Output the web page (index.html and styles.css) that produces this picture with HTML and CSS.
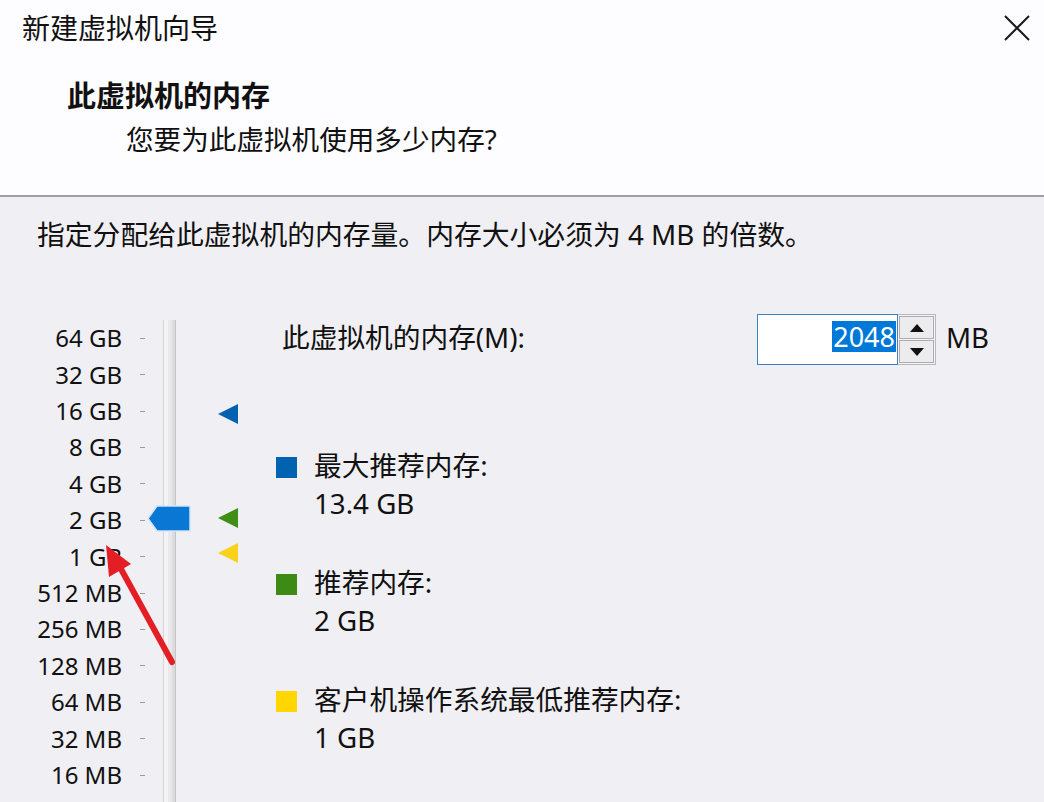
FILE: index.html
```html
<!DOCTYPE html>
<html lang="zh-CN">
<head>
<meta charset="utf-8">
<title>新建虚拟机向导</title>
<link rel="stylesheet" href="styles.css">
</head>
<body>
<div class="dialog">
  <header class="top">
    <div class="titlebar">
      <span class="title">新建虚拟机向导</span>
      <svg class="close" width="26" height="26" viewBox="0 0 26 26"><path d="M1 1 L25 25 M25 1 L1 25" stroke="#1a1a1a" stroke-width="2" fill="none"/></svg>
    </div>
    <div class="heading">此虚拟机的内存</div>
    <div class="subheading">您要为此虚拟机使用多少内存?</div>
  </header>
  <main class="content">
    <p class="intro">指定分配给此虚拟机的内存量。内存大小必须为 4 MB 的倍数。</p>
    <div class="main">
      <div class="slider">
        <div class="scale">
          <div class="row"><span class="lbl">64 GB</span><span class="tick"></span></div>
          <div class="row"><span class="lbl">32 GB</span><span class="tick"></span></div>
          <div class="row"><span class="lbl">16 GB</span><span class="tick"></span></div>
          <div class="row"><span class="lbl">8 GB</span><span class="tick"></span></div>
          <div class="row"><span class="lbl">4 GB</span><span class="tick"></span></div>
          <div class="row"><span class="lbl">2 GB</span><span class="tick"></span></div>
          <div class="row"><span class="lbl">1 GB</span><span class="tick"></span></div>
          <div class="row"><span class="lbl">512 MB</span><span class="tick"></span></div>
          <div class="row"><span class="lbl">256 MB</span><span class="tick"></span></div>
          <div class="row"><span class="lbl">128 MB</span><span class="tick"></span></div>
          <div class="row"><span class="lbl">64 MB</span><span class="tick"></span></div>
          <div class="row"><span class="lbl">32 MB</span><span class="tick"></span></div>
          <div class="row"><span class="lbl">16 MB</span><span class="tick"></span></div>
          <div class="row"><span class="lbl">8 MB</span><span class="tick"></span></div>
          <div class="row"><span class="lbl">4 MB</span><span class="tick"></span></div>
        </div>
        <div class="track"></div>
        <svg class="thumb" width="44" height="27" viewBox="0 0 44 27"><path d="M1 13.5 L10 1 L43 1 L43 26 L10 26 Z" fill="#0a77d5" stroke="#cfe6fa" stroke-width="1.5"/></svg>
        <svg class="marker m-max" width="22" height="22" viewBox="0 0 22 22"><path d="M1 11 L21 1 L21 21 Z" fill="#0061b0"/></svg>
        <svg class="marker m-rec" width="22" height="22" viewBox="0 0 22 22"><path d="M1 11 L21 1 L21 21 Z" fill="#3f8e16"/></svg>
        <svg class="marker m-min" width="22" height="22" viewBox="0 0 22 22"><path d="M1 11 L21 1 L21 21 Z" fill="#f8d21c"/></svg>
      </div>
      <div class="panel">
        <div class="memrow">
          <span class="memlabel">此虚拟机的内存(M):</span>
          <div class="spin">
            <div class="field"><span class="sel">2048</span></div>
            <div class="buttons">
              <div class="btn"><svg width="14" height="8" viewBox="0 0 14 8"><path d="M7 0 L14 8 L0 8 Z" fill="#111"/></svg></div>
              <div class="btn"><svg width="14" height="8" viewBox="0 0 14 8"><path d="M0 0 L14 0 L7 8 Z" fill="#111"/></svg></div>
            </div>
          </div>
          <span class="unit">MB</span>
        </div>
        <div class="legend">
          <div class="item">
            <div class="line"><span class="sw sw-blue"></span><span>最大推荐内存:</span></div>
            <div class="value">13.4 GB</div>
          </div>
          <div class="item">
            <div class="line"><span class="sw sw-green"></span><span>推荐内存:</span></div>
            <div class="value">2 GB</div>
          </div>
          <div class="item">
            <div class="line"><span class="sw sw-yellow"></span><span>客户机操作系统最低推荐内存:</span></div>
            <div class="value">1 GB</div>
          </div>
        </div>
      </div>
    </div>
  </main>
  <svg class="arrow" width="1044" height="802" viewBox="0 0 1044 802">
    <line x1="172" y1="662" x2="121" y2="569" stroke="#e31e24" stroke-width="6" stroke-linecap="round"/>
    <polygon points="106,545 131,564 109,577" fill="#e31e24"/>
  </svg>
</div>
</body>
</html>
```

FILE: styles.css
```css
html, body {
  margin: 0;
  padding: 0;
}
body {
  width: 1044px;
  height: 802px;
  overflow: hidden;
  font-family: "Noto Sans", "Noto Sans CJK SC", sans-serif;
  color: #111;
  background: #f0eff3;
}
.dialog {
  position: relative;
  width: 1044px;
  height: 802px;
  overflow: hidden;
}
.top {
  height: 195px;
  background: #fdfcff;
  border-bottom: 2px solid #9f9fa3;
  box-sizing: content-box;
}
.titlebar {
  height: 56px;
  display: flex;
  align-items: center;
  justify-content: space-between;
  padding: 0 14px 0 22px;
}
.title {
  font-size: 28px;
  line-height: 36px;
}
.close {
  display: block;
  margin-top: -1px;
}
.heading {
  margin-top: 22px;
  padding-left: 67px;
  font-size: 29px;
  line-height: 36px;
  font-weight: bold;
}
.subheading {
  margin-top: 7px;
  padding-left: 126px;
  font-size: 27.6px;
  line-height: 36px;
}
.content {
  background: #f0eff3;
}
.intro {
  margin: 0;
  padding: 19px 0 0 37px;
  font-size: 27.8px;
  line-height: 36px;
}
.main {
  margin-top: 62px;
  display: flex;
}
.slider {
  position: relative;
  width: 276px;
  display: flex;
  flex-shrink: 0;
}
.scale {
  width: 146px;
  padding-top: 6px;
}
.row {
  height: 36.42px;
  display: flex;
  align-items: center;
}
.lbl {
  width: 122px;
  text-align: right;
  font-size: 24px;
  line-height: 30px;
  white-space: nowrap;
}
.tick {
  margin-left: 18px;
  width: 5px;
  height: 1px;
  background: #9a9a9a;
}
.track {
  margin-left: 17px;
  margin-top: 6px;
  width: 11px;
  height: 600px;
  background: #e9e8ec;
  border-left: 1px solid #d6d6d8;
  border-right: 1px solid #c4c4c6;
  box-shadow: inset 4px 0 0 #f4f4f6, inset -3px 0 0 #dcdcde;
}
.thumb {
  position: absolute;
  left: 147px;
  top: 191px;
}
.marker {
  position: absolute;
  left: 217px;
}
.m-max { top: 89px; }
.m-rec { top: 193px; }
.m-min { top: 228px; }
.panel {
  flex: 1;
}
.memrow {
  height: 51px;
  display: flex;
  align-items: center;
}
.memlabel {
  width: 475px;
  padding-left: 6px;
  padding-bottom: 5px;
  font-size: 27.7px;
  line-height: 36px;
}
.spin {
  display: flex;
  height: 51px;
}
.field {
  border: 1px solid #3f7fc8;
  background: #fff;
  display: flex;
  justify-content: flex-end;
  align-items: flex-start;
  padding-top: 6px;
  box-sizing: border-box;
  height: 51px;
  width: 141px;
}
.sel {
  background: #0078d7;
  color: #fff;
  font-size: 27px;
  line-height: 31px;
  padding: 0 1px 0 1px;
  margin-right: 1px;
}
.buttons {
  width: 38px;
  display: flex;
  flex-direction: column;
  border: 1px solid #b9b9bb;
  border-left: none;
  box-sizing: border-box;
  padding: 1px;
  gap: 1px;
  background: #f4f4f6;
}
.btn {
  flex: 1;
  border: 1px solid #adadad;
  background: #ececee;
  display: flex;
  align-items: center;
  justify-content: center;
}
.btn svg { display: block; }
.unit {
  margin-left: 10px;
  padding-bottom: 5px;
  font-size: 27.7px;
  line-height: 36px;
}
.legend {
  margin-top: 81px;
  display: flex;
  flex-direction: column;
  gap: 41px;
}
.item {
  font-size: 27.7px;
  line-height: 38px;
}
.line {
  display: flex;
  align-items: flex-start;
}
.sw {
  width: 21px;
  height: 21px;
  margin-top: 11px;
  margin-right: 17px;
  flex-shrink: 0;
}
.sw-blue { background: #0063b1; }
.sw-green { background: #3d8b14; }
.sw-yellow { background: #ffd600; }
.value {
  padding-left: 38px;
}
.arrow {
  position: absolute;
  left: 0;
  top: 0;
  pointer-events: none;
}
```
